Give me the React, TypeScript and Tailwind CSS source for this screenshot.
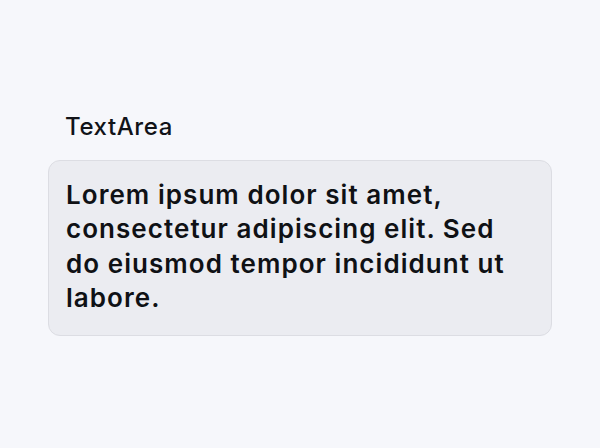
import React from 'react';

const App: React.FC = () => {
  const text =
    'Lorem ipsum dolor sit amet, consectetur adipiscing elit. Sed do eiusmod tempor incididunt ut labore.';

  return (
    <div className="w-[600px] h-[448px] bg-[#f6f7fb] font-['Inter',sans-serif] flex flex-col pt-[111px] px-[48px]">
      <label className="pl-[17px] text-[24px] leading-[32px] font-medium tracking-[0.6px] text-[#111318] mb-[17px]">
        TextArea
      </label>
      <textarea
        readOnly
        value={text}
        className="w-[504px] h-[176px] resize-none rounded-[12px] border border-[#dcdde3] bg-[#ebecf1] px-[17px] pt-[17px] text-[26px] leading-[34.3px] font-semibold tracking-[1.05px] text-[#0f1115] outline-none"
      />
    </div>
  );
};

export default App;
